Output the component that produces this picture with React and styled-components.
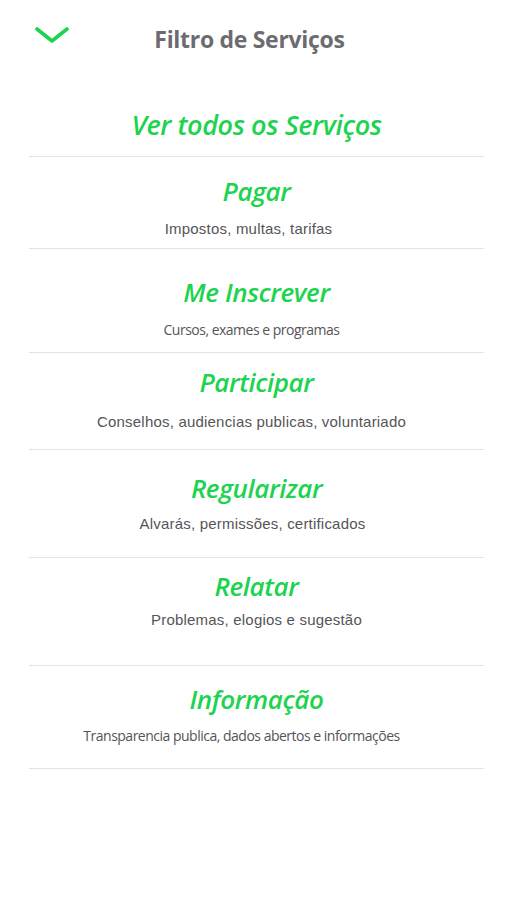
import React from 'react'
import styled, { createGlobalStyle } from 'styled-components'

const GlobalStyle = createGlobalStyle`
  html, body {
    margin: 0;
    padding: 0;
    background: #ffffff;
  }
`

const GREEN = '#1dd34f'

const Page = styled.div`
  width: 507px;
  min-height: 900px;
  background: #ffffff;
  font-family: "Open Sans", sans-serif;
`

const Header = styled.div`
  height: 78px;
  display: flex;
  align-items: center;
  justify-content: center;
  position: relative;
`

const BackButton = styled.button`
  position: absolute;
  left: 33px;
  top: 24px;
  width: 38px;
  height: 22px;
  border: none;
  background: none;
  padding: 0;
  cursor: pointer;
  display: flex;
  align-items: center;
  justify-content: center;
`

const HeaderTitle = styled.h1`
  margin: 0 8px 0 0;
  font-family: "Open Sans", sans-serif;
  font-weight: 700;
  font-size: 23px;
  color: #6c6c70;
  letter-spacing: -0.3px;
`

const List = styled.div`
  margin: 0 23px 0 29px;
`

const Item = styled.div`
  display: flex;
  flex-direction: column;
  align-items: center;
  padding-top: ${(p) => p.$top}px;
  padding-bottom: ${(p) => p.$bottom}px;
  border-bottom: 1px solid #e3e3e3;
  gap: ${(p) => p.$gap}px;
  cursor: pointer;
`

const Title = styled.div`
  font-family: "Open Sans", sans-serif;
  font-style: italic;
  font-weight: 600;
  font-size: ${(p) => (p.$big ? 27 : 26)}px;
  line-height: ${(p) => (p.$big ? 40 : 36)}px;
  color: ${GREEN};
  letter-spacing: -0.4px;
`

const Subtitle = styled.div`
  font-family: ${(p) => (p.$open ? '"Open Sans", sans-serif' : '"Liberation Sans", Arial, sans-serif')};
  font-size: ${(p) => (p.$open ? 14 : 15)}px;
  line-height: 20px;
  color: #555558;
  letter-spacing: ${(p) => (p.$open ? '-0.5px' : '0.2px')};
  margin-right: ${(p) => p.$shift * 2}px;
`

const items = [
  { title: 'Pagar', sub: 'Impostos, multas, tarifas', top: 16, gap: 10, bottom: 9, shift: 8 },
  { title: 'Me Inscrever', sub: 'Cursos, exames e programas', top: 25, gap: 10, bottom: 12, shift: 5, open: true },
  { title: 'Participar', sub: 'Conselhos, audiencias publicas, voluntariado', top: 11, gap: 12, bottom: 17, shift: 5 },
  { title: 'Regularizar', sub: 'Alvarás, permissões, certificados', top: 20, gap: 8, bottom: 23, shift: 4 },
  { title: 'Relatar', sub: 'Problemas, elogios e sugestão', top: 10, gap: 6, bottom: 35, shift: 0 },
  { title: 'Informação', sub: 'Transparencia publica, dados abertos e informações', top: 15, gap: 9, bottom: 22, shift: 15, open: true },
]

const Chevron = () => (
  <svg width="34" height="18" viewBox="0 0 34 18" fill="none">
    <path d="M2 3 L17 15 L32 3" stroke={GREEN} strokeWidth="3.6" strokeLinecap="round" strokeLinejoin="round" />
  </svg>
)

const App = () => {
  return (
    <>
      <GlobalStyle />
      <Page>
        <Header>
          <BackButton aria-label="Fechar">
            <Chevron />
          </BackButton>
          <HeaderTitle>Filtro de Serviços</HeaderTitle>
        </Header>
        <List>
          <Item $top={27} $bottom={11} $gap={0}>
            <Title $big>Ver todos os Serviços</Title>
          </Item>
          {items.map((it) => (
            <Item key={it.title} $top={it.top} $bottom={it.bottom} $gap={it.gap}>
              <Title>{it.title}</Title>
              <Subtitle $open={it.open} $shift={it.shift}>{it.sub}</Subtitle>
            </Item>
          ))}
        </List>
      </Page>
    </>
  )
}

export default App
